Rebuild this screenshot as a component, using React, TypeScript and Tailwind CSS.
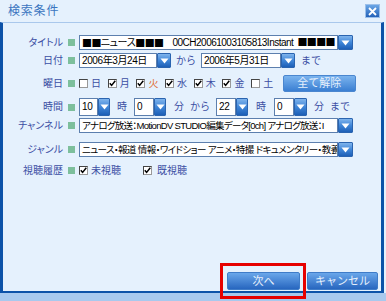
import React from 'react';

const jp = "font-['Liberation_Sans','Noto_Sans_CJK_JP',sans-serif]";

const DropBtn = ({ w = 14, h = 15 }: { w?: number; h?: number }) => (
  <div
    className="flex shrink-0 items-center justify-center rounded-[1px] border border-[#2a64b0] bg-gradient-to-b from-[#7fb4ec] via-[#3f86d8] to-[#1d5fb6]"
    style={{ width: w, height: h }}
  >
    <svg width="9" height="6" viewBox="0 0 9 6">
      <polygon points="0.5,0.5 8.5,0.5 4.5,5.5" fill="#ffffff" />
    </svg>
  </div>
);

const Field = ({ w, h = 15, children }: { w: number; h?: number; children: React.ReactNode }) => (
  <div
    className="flex shrink-0 items-center overflow-hidden whitespace-nowrap border border-[#5c7fae] bg-white pl-[2px] text-[10px] leading-none tracking-[-0.4px] text-black [font-feature-settings:'palt']"
    style={{ width: w, height: h }}
  >
    {children}
  </div>
);

const Sq = ({ n }: { n: number }) => (
  <span className="font-['Noto_Sans_CJK_JP',sans-serif] text-[10px] tracking-[-0.6px]">{'■'.repeat(n)}</span>
);

const Check = ({ on }: { on: boolean }) => (
  <div className="flex h-[9px] w-[9px] shrink-0 items-center justify-center border border-t-[#444] border-l-[#444] border-b-[#999] border-r-[#999] bg-white">
    {on && (
      <svg width="7" height="7" viewBox="0 0 7 7">
        <polyline points="0.8,3.2 2.6,5.4 6.3,0.8" fill="none" stroke="#000" strokeWidth="1.5" />
      </svg>
    )}
  </div>
);

const Row = ({ label, h = 15, mt, children }: { label: string; h?: number; mt: number; children: React.ReactNode }) => (
  <div className="flex items-center" style={{ height: h, marginTop: mt }}>
    <div className="w-[60px] whitespace-nowrap text-right text-[10px] leading-none text-[#3b4ea3] [font-feature-settings:'palt']">
      {label}
    </div>
    <div className="ml-[5px] h-[7px] w-[7px] shrink-0 bg-[#7dbf9c]" />
    <div className="ml-[4px] flex items-center">{children}</div>
  </div>
);

const Txt = ({ children, ml, color = 'text-[#3b4ea3]' }: { children: React.ReactNode; ml: number; color?: string }) => (
  <span className={`whitespace-nowrap text-[10px] leading-none ${color}`} style={{ marginLeft: ml }}>
    {children}
  </span>
);

const days = [
  { d: '日', on: false, c: 'text-[#3b4ea3]' },
  { d: '月', on: true, c: 'text-[#3b4ea3]' },
  { d: '火', on: true, c: 'text-[#e0703a]' },
  { d: '水', on: true, c: 'text-[#3b4ea3]' },
  { d: '木', on: true, c: 'text-[#3b4ea3]' },
  { d: '金', on: true, c: 'text-[#3b4ea3]' },
  { d: '土', on: false, c: 'text-[#3b4ea3]' },
];

export default function App() {
  return (
    <div className={`relative flex h-[301px] w-[386px] flex-col bg-[#e5f1fd] ${jp}`}>
      {/* title bar */}
      <div className="flex h-[22px] items-center justify-between pl-[8px] pr-[6px]">
        <span className="text-[12px] tracking-[0.8px] text-[#3a75c0]">検索条件</span>
        <div className="flex h-[14px] w-[15px] items-center justify-center border border-[#9cc0ea] bg-gradient-to-b from-[#6aa6e6] to-[#2462b8]">
          <svg width="9" height="9" viewBox="0 0 9 9">
            <path d="M1 1 L8 8 M8 1 L1 8" stroke="#fff" strokeWidth="1.8" />
          </svg>
        </div>
      </div>

      {/* panel */}
      <div className="flex h-[271px] w-[384px] flex-col border-x-[3px] border-b-[2px] border-t border-x-[#0c52a8] border-b-[#0c52a8] border-t-[#a9c8ec]">
        <Row label="タイトル" mt={12}>
          <Field w={259}>
            <Sq n={2} />ニュース<Sq n={3} />
            <span className="ml-[9px] tracking-[-0.5px]">00CH20061003105813Instant</span>
            <span className="ml-[4px]"><Sq n={4} /></span>
          </Field>
          <DropBtn w={15} />
        </Row>

        <Row label="日付" mt={3}>
          <Field w={78}>2006年3月24日</Field>
          <DropBtn />
          <Txt ml={5}>から</Txt>
          <div className="ml-[5px] flex">
            <Field w={80}>2006年5月31日</Field>
            <DropBtn />
          </div>
          <Txt ml={6}>まで</Txt>
        </Row>

        <Row label="曜日" h={17} mt={7}>
          <div className="flex items-center">
            {days.map((x) => (
              <div key={x.d} className="flex w-[28.7px] items-center">
                <Check on={x.on} />
                <span className={`ml-[3px] text-[10px] leading-none ${x.c}`}>{x.d}</span>
              </div>
            ))}
          </div>
          <div className="ml-[3px] flex h-[17px] w-[73px] items-center justify-center rounded-[2px] border border-[#4a86cf] bg-gradient-to-b from-[#7ab3ee] to-[#3a7fd2] text-[11px] text-[#e6f0fc]">
            全て解除
          </div>
        </Row>

        <Row label="時間" h={18} mt={6}>
          <Field w={19} h={18}>10</Field>
          <DropBtn w={12} h={18} />
          <Txt ml={7}>時</Txt>
          <div className="ml-[7px] flex">
            <Field w={20} h={18}>0</Field>
            <DropBtn w={12} h={18} />
          </div>
          <Txt ml={8}>分</Txt>
          <Txt ml={6}>から</Txt>
          <div className="ml-[6px] flex">
            <Field w={20} h={18}>22</Field>
            <DropBtn w={12} h={18} />
          </div>
          <Txt ml={8}>時</Txt>
          <div className="ml-[8px] flex">
            <Field w={20} h={18}>0</Field>
            <DropBtn w={13} h={18} />
          </div>
          <Txt ml={7}>分</Txt>
          <Txt ml={6}>まで</Txt>
        </Row>

        <Row label="チャンネル" mt={2}>
          <Field w={259}>
            <span className="text-[9.5px] tracking-[-0.7px]">アナログ放送：MotionDV STUDIO編集データ[0ch] アナログ放送：I</span>
          </Field>
          <DropBtn w={15} />
        </Row>

        <Row label="ジャンル" mt={9}>
          <Field w={259}>
            <span className="text-[9.5px] tracking-[-0.6px]">ニュース・報道 情報・ワイドショー アニメ・特撮 ドキュメンタリー・教養</span>
          </Field>
          <DropBtn w={15} />
        </Row>

        <Row label="視聴履歴" mt={6}>
          <Check on />
          <span className="ml-[3px] text-[10px] leading-none text-[#3b4ea3]">未視聴</span>
          <div className="ml-[22px] flex items-center">
            <Check on />
            <span className="ml-[5px] text-[10px] leading-none text-[#3b4ea3]">既視聴</span>
          </div>
        </Row>

        <div className="flex-1" />

        <div className="flex justify-end gap-[7px] pb-[1px] pr-[3px]">
          <div className="flex h-[18px] w-[73px] items-center justify-center rounded-[2px] border border-[#3f7cc8] bg-gradient-to-b from-[#6aa7ea] to-[#2766bf] text-[11px] text-[#e6f0fc]">
            次へ
          </div>
          <div className="flex h-[18px] w-[71px] items-center justify-center rounded-[2px] border border-[#3f7cc8] bg-gradient-to-b from-[#6aa7ea] to-[#2766bf] text-[11px] text-[#e6f0fc]">
            キャンセル
          </div>
        </div>
      </div>

      <div className="flex-1 bg-[#a8c9ee]" />

      {/* red highlight annotation */}
      <div className="absolute left-[220px] top-[263px] h-[36px] w-[86px] border-[3px] border-[#e60000]" />
    </div>
  );
}
